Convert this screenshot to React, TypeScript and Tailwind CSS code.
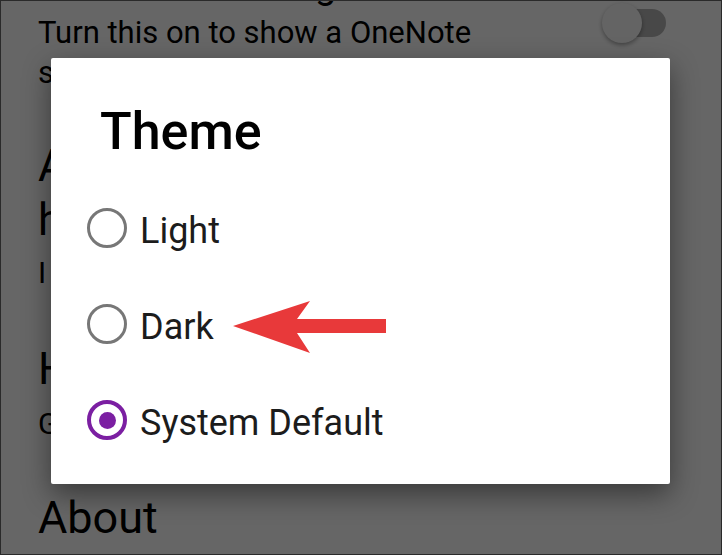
import React from 'react'

interface ThemeOption {
  id: string
  label: string
  selected: boolean
}

const options: ThemeOption[] = [
  { id: 'light', label: 'Light', selected: false },
  { id: 'dark', label: 'Dark', selected: false },
  { id: 'system', label: 'System Default', selected: true },
]

function Toggle() {
  return (
    <div className="relative w-[64px] h-[40px] shrink-0 mt-[36px]">
      <div className="absolute left-[8px] top-[6px] w-[56px] h-[28px] rounded-full bg-[#b4b4b4]" />
      <div className="absolute left-0 top-0 w-[40px] h-[40px] rounded-full bg-[#fafafa] shadow-[0_2px_4px_rgba(0,0,0,0.35)]" />
    </div>
  )
}

function Radio({ selected }: { selected: boolean }) {
  if (selected) {
    return (
      <div className="w-[40px] h-[40px] rounded-full border-[4px] border-[#7b1fa2] flex items-center justify-center shrink-0">
        <div className="w-[17px] h-[17px] rounded-full bg-[#7b1fa2]" />
      </div>
    )
  }
  return <div className="w-[40px] h-[40px] rounded-full border-[3px] border-[#777777] shrink-0" />
}

export default function App() {
  return (
    <div
      className="relative w-[722px] h-[555px] overflow-hidden border border-[#2a2a2a] bg-white text-black"
      style={{ fontFamily: 'Roboto, "Noto Sans", sans-serif' }}
    >
      {/* Settings page underneath */}
      <div className="flex flex-col pl-[37px]">
        <div className="flex justify-between pr-[55px] mt-[-34px]">
          <div className="flex flex-col">
            <div className="mt-[-5px] mb-[5px] text-[38px] leading-[46px] whitespace-nowrap">Show Notes badge</div>
            <div className="text-[31px] leading-[40px] whitespace-nowrap">Turn this on to show a OneNote</div>
            <div className="text-[31px] leading-[40px] whitespace-nowrap">sticky notes badge</div>
          </div>
          <Toggle />
        </div>

        <div className="mt-[46px] text-[44px] leading-[54px] whitespace-nowrap">Add to</div>
        <div className="text-[44px] leading-[54px] whitespace-nowrap">home</div>
        <div className="mt-[6px] text-[30px] leading-[40px] whitespace-nowrap">I use it</div>

        <div className="mt-[49px] text-[44px] leading-[54px] whitespace-nowrap">Help</div>
        <div className="mt-[8px] text-[30px] leading-[40px] whitespace-nowrap">Get help</div>

        <div className="mt-[47px] text-[45px] leading-[54px] whitespace-nowrap">About</div>
      </div>

      {/* Scrim */}
      <div className="absolute inset-0 bg-black/60" />

      {/* Dialog */}
      <div className="absolute left-[50px] top-[57px] w-[619px] h-[426px] bg-white rounded-[2px] shadow-[0_10px_28px_rgba(0,0,0,0.45)] flex flex-col">
        <h2 className="pl-[49px] pt-[44px] text-[52px] leading-[60px] font-medium text-black">Theme</h2>
        <div className="mt-[18px] flex flex-col">
          {options.map((option) => (
            <div key={option.id} className="h-[96px] flex items-center pl-[36px] gap-[13px]">
              <Radio selected={option.selected} />
              <span className="mt-[6px] text-[36px] leading-[36px] text-[#1c1c1c]">{option.label}</span>
            </div>
          ))}
        </div>
      </div>

      {/* Annotation arrow */}
      <svg
        className="absolute left-[229px] top-[297px]"
        width="160"
        height="58"
        viewBox="0 0 160 58"
      >
        <polygon
          points="3,28 80,3 67,21 156,21 156,35 67,35 80,55"
          fill="#e8393a"
        />
      </svg>
    </div>
  )
}
